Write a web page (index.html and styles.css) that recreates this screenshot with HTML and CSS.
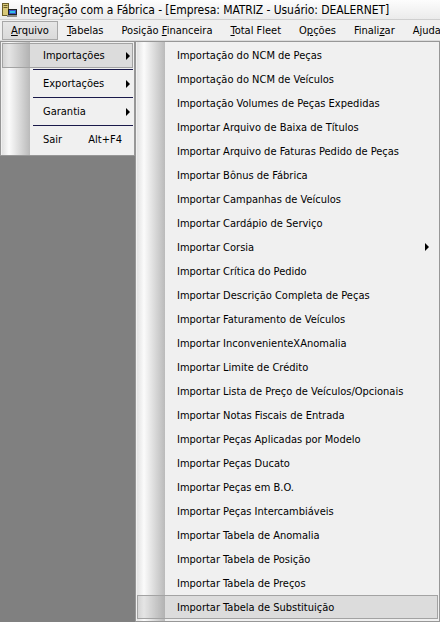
FILE: index.html
```html
<!DOCTYPE html>
<html>
<head>
<meta charset="utf-8">
<link rel="stylesheet" href="styles.css">
</head>
<body>
<div class="window">
  <div class="titlebar">
    <svg class="appicon" width="16" height="16" viewBox="0 0 16 16">
      <rect x="1.5" y="1.5" width="6" height="12" fill="#d8c878" stroke="#6b5f2a" stroke-width="1"/>
      <rect x="2.5" y="3" width="4" height="1" fill="#6b5f2a"/>
      <rect x="2.5" y="5" width="4" height="1" fill="#6b5f2a"/>
      <rect x="7.5" y="7.5" width="8" height="5" fill="#3a58c8" stroke="#222" stroke-width="1"/>
      <rect x="9" y="9" width="5" height="2" fill="#2ec0e8"/>
      <rect x="6" y="13" width="10" height="2" fill="#8a8a8a"/>
    </svg>
    <span class="title">Integração com a Fábrica - [Empresa: MATRIZ - Usuário: DEALERNET]</span>
  </div>
  <div class="menubar">
    <span class="mb-item active"><u>A</u>rquivo</span>
    <span class="mb-item"><u>T</u>abelas</span>
    <span class="mb-item">Posição <u>F</u>inanceira</span>
    <span class="mb-item"><u>T</u>otal Fleet</span>
    <span class="mb-item">O<u>p</u>ções</span>
    <span class="mb-item">Finali<u>z</u>ar</span>
    <span class="mb-item">Ajuda</span>
  </div>
  <div class="workspace">
    <div class="menu menu1">
      <div class="m1-row hl"><span class="label">Importações</span><span class="arrow"></span></div>
      <div class="sep"></div>
      <div class="m1-row"><span class="label">Exportações</span><span class="arrow"></span></div>
      <div class="sep"></div>
      <div class="m1-row"><span class="label">Garantia</span><span class="arrow"></span></div>
      <div class="sep"></div>
      <div class="m1-row"><span class="label">Sair</span><span class="shortcut">Alt+F4</span></div>
    </div>
    <div class="menu menu2">
      <div class="m2-row"><span class="label">Importação do NCM de Peças</span></div>
      <div class="m2-row"><span class="label">Importação do NCM de Veículos</span></div>
      <div class="m2-row"><span class="label">Importação Volumes de Peças Expedidas</span></div>
      <div class="m2-row"><span class="label">Importar Arquivo de Baixa de Títulos</span></div>
      <div class="m2-row"><span class="label">Importar Arquivo de Faturas Pedido de Peças</span></div>
      <div class="m2-row"><span class="label">Importar Bônus de Fábrica</span></div>
      <div class="m2-row"><span class="label">Importar Campanhas de Veículos</span></div>
      <div class="m2-row"><span class="label">Importar Cardápio de Serviço</span></div>
      <div class="m2-row"><span class="label">Importar Corsia</span><span class="arrow"></span></div>
      <div class="m2-row"><span class="label">Importar Crítica do Pedido</span></div>
      <div class="m2-row"><span class="label">Importar Descrição Completa de Peças</span></div>
      <div class="m2-row"><span class="label">Importar Faturamento de Veículos</span></div>
      <div class="m2-row"><span class="label">Importar InconvenienteXAnomalia</span></div>
      <div class="m2-row"><span class="label">Importar Limite de Crédito</span></div>
      <div class="m2-row"><span class="label">Importar Lista de Preço de Veículos/Opcionais</span></div>
      <div class="m2-row"><span class="label">Importar Notas Fiscais de Entrada</span></div>
      <div class="m2-row"><span class="label">Importar Peças Aplicadas por Modelo</span></div>
      <div class="m2-row"><span class="label">Importar Peças Ducato</span></div>
      <div class="m2-row"><span class="label">Importar Peças em B.O.</span></div>
      <div class="m2-row"><span class="label">Importar Peças Intercambiáveis</span></div>
      <div class="m2-row"><span class="label">Importar Tabela de Anomalia</span></div>
      <div class="m2-row"><span class="label">Importar Tabela de Posição</span></div>
      <div class="m2-row"><span class="label">Importar Tabela de Preços</span></div>
      <div class="m2-row hl"><span class="label">Importar Tabela de Substituição</span></div>
    </div>
  </div>
</div>
</body>
</html>
```

FILE: styles.css
```css
html, body {
  margin: 0;
  padding: 0;
  width: 440px;
  height: 622px;
  overflow: hidden;
}
.window {
  width: 440px;
  height: 622px;
  display: flex;
  flex-direction: column;
  font-family: "DejaVu Sans Condensed", "DejaVu Sans", sans-serif;
  color: #000;
}
.titlebar {
  height: 20px;
  box-sizing: border-box;
  display: flex;
  align-items: center;
  gap: 3px;
  padding-left: 1px;
  background: linear-gradient(#fdfdfd, #ebebeb);
  border-bottom: 1px solid #cfcfcf;
}
.appicon { flex: none; }
.title {
  font-size: 12px;
  white-space: nowrap;
  letter-spacing: -0.07px;
}
.menubar {
  height: 21px;
  box-sizing: border-box;
  display: flex;
  align-items: center;
  padding-left: 2px;
  background: #f0f0f0;
  border-bottom: 1px solid #dcdcdc;
  font-size: 11px;
}
.mb-item {
  padding: 0 8px;
  height: 19px;
  line-height: 17px;
  box-sizing: border-box;
  white-space: nowrap;
  border: 1px solid transparent;
}
.mb-item.active {
  background: linear-gradient(#e6e6e6, #dadada);
  border-color: #a8a8a8;
}
.workspace {
  flex: 1;
  display: flex;
  align-items: flex-start;
  background: #808080;
  min-height: 0;
}
.menu {
  border: 1px solid #979797;
  box-sizing: border-box;
  padding: 1px 1px;
  font-size: 11px;
  background-color: #f0f0f0;
  background-image: linear-gradient(to right, #e2e2e2, #fbfbfb 25%, #bababa);
  background-repeat: no-repeat;
  background-position: 1px 0;
  background-size: 28px 100%;
}
.menu1 {
  width: 135px;
  flex: none;
  padding-bottom: 2px;
}
.menu2 {
  flex: 1;
  height: 581px;
}
.m1-row {
  height: 25px;
  display: flex;
  align-items: center;
  box-sizing: border-box;
  border: 1px solid transparent;
  margin-bottom: 1px;
}
.m1-row .label {
  margin-left: 40px;
  flex: 1;
}
.m1-row .shortcut {
  margin-right: 10px;
}
.sep {
  height: 1px;
  margin: 0 0 1px 31px;
  background: #1a1a4a;
}
.hl {
  background: rgba(150, 150, 150, 0.22);
  border-color: #a3a3a3 !important;
}
.arrow {
  width: 0;
  height: 0;
  border-top: 4px solid transparent;
  border-bottom: 4px solid transparent;
  border-left: 4px solid #000;
  margin-right: 2px;
}
.m2-row {
  height: 24px;
  display: flex;
  align-items: center;
  box-sizing: border-box;
  border: 1px solid transparent;
}
.m2-row .label {
  margin-left: 39px;
  flex: 1;
  white-space: nowrap;
}
.m2-row .arrow {
  margin-right: 8px;
}
```
